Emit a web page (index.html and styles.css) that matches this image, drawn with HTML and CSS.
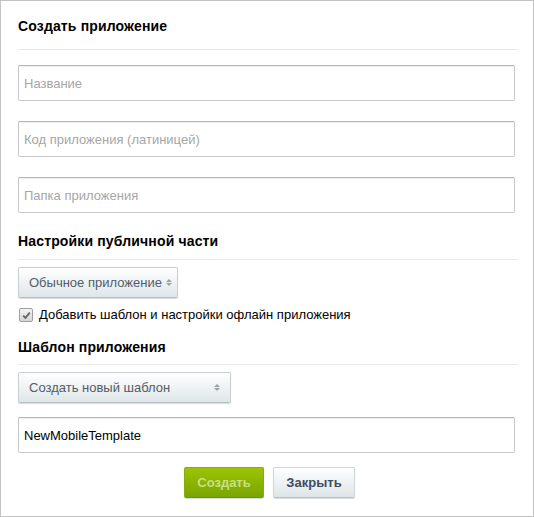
FILE: index.html
```html
<!DOCTYPE html>
<html lang="ru">
<head>
<meta charset="utf-8">
<title>Создать приложение</title>
<link rel="stylesheet" href="styles.css">
</head>
<body>
<div class="dialog">
  <h2 class="heading heading-first">Создать приложение</h2>
  <div class="fields">
    <input class="field" type="text" placeholder="Название">
    <input class="field" type="text" placeholder="Код приложения (латиницей)">
    <input class="field" type="text" placeholder="Папка приложения">
  </div>
  <h2 class="heading heading-second">Настройки публичной части</h2>
  <div class="select select-short">
    <span class="select-text">Обычное приложение</span>
    <span class="arrows"><i class="up"></i><i class="down"></i></span>
  </div>
  <label class="check-row">
    <span class="checkbox"><svg width="11" height="11" viewBox="0 0 11 11"><path d="M2.2 5.6 L4.4 7.8 L8.8 2.6" fill="none" stroke="#666" stroke-width="1.8"/></svg></span>
    <span class="check-label">Добавить шаблон и настройки офлайн приложения</span>
  </label>
  <h2 class="heading heading-third">Шаблон приложения</h2>
  <div class="select select-long">
    <span class="select-text">Создать новый шаблон</span>
    <span class="arrows"><i class="up"></i><i class="down"></i></span>
  </div>
  <input class="field field-value" type="text" value="NewMobileTemplate">
  <div class="buttons">
    <span class="btn btn-green">Создать</span>
    <span class="btn btn-gray">Закрыть</span>
  </div>
</div>
</body>
</html>
```
FILE: styles.css
```css
html, body {
  margin: 0;
  padding: 0;
  background: #fff;
}
body {
  font-family: "Liberation Sans", Arial, sans-serif;
  font-size: 13px;
  color: #000;
}
.dialog {
  box-sizing: border-box;
  width: 534px;
  height: 517px;
  border: 1px solid #c4c4c4;
  padding: 17px 15px 0 17px;
  display: flex;
  flex-direction: column;
  align-items: flex-start;
}
.heading {
  align-self: stretch;
  margin: 0;
  font-size: 14px;
  line-height: 16px;
  font-weight: bold;
  letter-spacing: 0.15px;
  color: #000;
  border-bottom: 1px solid #e8e8e8;
}
.heading-first {
  padding-bottom: 15px;
}
.heading-second {
  margin-top: 20px;
  padding-bottom: 10px;
}
.heading-third {
  margin-top: 16px;
  padding-bottom: 9px;
}
.fields {
  margin-top: 15px;
  display: flex;
  flex-direction: column;
  gap: 20px;
}
.field {
  box-sizing: border-box;
  width: 497px;
  height: 36px;
  margin: 0;
  padding: 0 5px;
  border: 1px solid #c7c7c7;
  border-top-color: #b5b5b5;
  border-radius: 2px;
  box-shadow: inset 0 1px 1px rgba(0,0,0,0.07);
  font-family: "Liberation Sans", Arial, sans-serif;
  font-size: 13px;
  color: #000;
  background: #fff;
  outline: none;
}
.field::placeholder {
  color: #a6a6a6;
}
.field-value {
  margin-top: 14px;
}
.select {
  box-sizing: border-box;
  height: 31px;
  margin-top: 7px;
  padding: 0 10px 0 10px;
  display: flex;
  align-items: center;
  justify-content: space-between;
  border: 1px solid #c8cfd1;
  border-bottom-color: #b9c0c2;
  border-radius: 2px;
  background: linear-gradient(#ffffff, #dfe6e9);
  box-shadow: 0 1px 1px rgba(0,0,0,0.15);
  color: #535c69;
}
.select-short {
  width: 160px;
}
.select-long {
  width: 213px;
}
.select-text {
  line-height: 16px;
  white-space: nowrap;
}
.arrows {
  display: flex;
  flex-direction: column;
  gap: 1px;
  margin-left: 4px;
}
.arrows i {
  display: block;
  width: 0;
  height: 0;
  border-left: 3px solid transparent;
  border-right: 3px solid transparent;
}
.arrows .up {
  border-bottom: 3px solid #9aa3a8;
}
.arrows .down {
  border-top: 3px solid #9aa3a8;
}
.check-row {
  margin-top: 9px;
  display: flex;
  align-items: center;
  gap: 6px;
  line-height: 16px;
}
.checkbox {
  box-sizing: border-box;
  width: 14px;
  height: 14px;
  margin-left: 1px;
  border: 1px solid #a0a0a0;
  border-radius: 2px;
  background: linear-gradient(#f3f3f3, #d6d6d6);
  display: flex;
  align-items: center;
  justify-content: center;
}
.check-label {
  color: #000;
}
.buttons {
  align-self: stretch;
  margin-top: 14px;
  display: flex;
  justify-content: center;
  gap: 9px;
  padding-left: 3px;
}
.btn {
  box-sizing: border-box;
  height: 31px;
  display: flex;
  align-items: center;
  justify-content: center;
  border-radius: 2px;
  font-weight: bold;
  font-size: 13px;
}
.btn-green {
  width: 80px;
  border: 1px solid #86ad0c;
  border-bottom-color: #6f9400;
  background: linear-gradient(#9cc400, #7aa500);
  color: #c7df8b;
  box-shadow: 0 1px 1px rgba(0,0,0,0.15);
}
.btn-gray {
  width: 82px;
  border: 1px solid #cfd6d8;
  border-bottom-color: #bcc3c6;
  background: linear-gradient(#ffffff, #dde4e7);
  color: #3f4b5e;
  box-shadow: 0 1px 1px rgba(0,0,0,0.15);
}
```
